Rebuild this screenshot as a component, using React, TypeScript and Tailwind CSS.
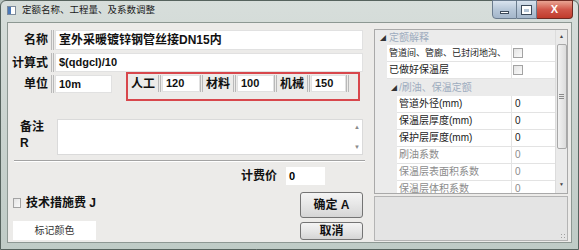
import React from "react";

const FONT =
  "font-['Liberation_Sans','Noto_Sans_CJK_SC',sans-serif]";

function Sep() {
  return (
    <div className="w-[3px] self-stretch flex justify-between">
      <div className="w-px bg-[#b9b9b9]" />
      <div className="w-px bg-[#b9b9b9]" />
    </div>
  );
}

function Field({ w, children }: { w: string; children?: React.ReactNode }) {
  return (
    <div
      className={`${w} self-stretch bg-white border border-[#e1e1e1] flex items-center pl-[3px] text-[11px] font-bold text-[#111] leading-none whitespace-nowrap overflow-hidden`}
    >
      {children}
    </div>
  );
}

function Label({ text, w = "w-[43px]" }: { text: string; w?: string }) {
  return (
    <div
      className={`${w} shrink-0 pr-[3px] text-right text-[12px] font-bold text-[#111] leading-none self-center`}
    >
      {text}
    </div>
  );
}

const ROWS1 = [
  { name: "管道间、管廊、已封闭地沟、", small: true },
  { name: "已做好保温层", small: false },
];

const ROWS2 = [
  { name: "管道外径(mm)", value: "0", dim: false },
  { name: "保温层厚度(mm)", value: "0", dim: false },
  { name: "保护层厚度(mm)", value: "0", dim: false },
  { name: "刷油系数", value: "0", dim: true },
  { name: "保温层表面积系数", value: "0", dim: true },
  { name: "保温层体积系数", value: "0", dim: true },
];

function Check() {
  return (
    <span className="block w-[10px] h-[10px] border border-[#a3a3a3] bg-gradient-to-br from-[#e4e4e4] to-[#fafafa]" />
  );
}

export default function App() {
  return (
    <div className={`w-[579px] h-[250px] overflow-hidden bg-[#b6c2bd] ${FONT}`}>
      <div className="w-[579px] h-[250px] flex flex-col rounded-t-[6px] border border-[#56635e] bg-gradient-to-b from-[#d7dedb] via-[#cad3cf] to-[#bfcbc6]">
        {/* title bar */}
        <div className="h-[21px] flex items-start shrink-0">
          <div className="mt-[5px] ml-[6px] w-[9px] h-[9px] bg-white border border-[#7d8b9c] flex">
            <div className="w-[3px] h-full bg-[#4a79b8]" />
          </div>
          <span className="ml-[6px] mt-[4px] text-[9.5px] leading-none text-[#1a1a1a]">
            定额名称、工程量、及系数调整
          </span>
          <div className="ml-auto mr-[5px] flex -mt-px h-[19px]">
            <div className="w-[25px] rounded-bl-[4px] border border-[#6b7c8e] bg-gradient-to-b from-[#d9e3ee] via-[#b7c7d8] to-[#a4b6ca] flex items-center justify-center">
              <div className="w-[9px] h-[3px] bg-white border border-[#3c4a5a] mt-[5px]" />
            </div>
            <div className="w-[20px] border-y border-r border-[#6b7c8e] bg-gradient-to-b from-[#d9e3ee] via-[#b7c7d8] to-[#a4b6ca] flex items-center justify-center">
              <div className="w-[9px] h-[8px] border-2 border-t-[3px] border-white outline outline-1 outline-[#3c4a5a]" />
            </div>
            <div className="w-[36px] rounded-br-[4px] border-y border-r border-[#6e2a22] bg-gradient-to-b from-[#e8a493] via-[#d0574a] to-[#c03b2c] flex items-center justify-center">
              <span className="text-white text-[11px] font-bold leading-none">X</span>
            </div>
          </div>
        </div>

        {/* client area */}
        <div className="ml-[6px] w-[565px] h-[221px] border border-[#8d9893] bg-[#ecebe9] flex shrink-0">
          {/* left side */}
          <div className="w-[357px] shrink-0 flex flex-col pt-[7px]">
            <div className="flex h-[20px]">
              <Label text="名称" />
              <Sep />
              <div className="ml-[1px] flex self-stretch">
                <Field w="w-[308px]">
                  <span className="text-[12px]">室外采暖镀锌钢管丝接DN15内</span>
                </Field>
              </div>
            </div>
            <div className="flex h-[19px] mt-[3px]">
              <Label text="计算式" />
              <Sep />
              <div className="ml-[1px] flex self-stretch">
                <Field w="w-[308px]">$(qdgcl)/10</Field>
              </div>
            </div>
            <div className="flex h-[29px] items-start">
              <div className="flex h-[18px] mt-[3px]">
                <Label text="单位" />
                <Sep />
                <div className="ml-[1px] flex self-stretch">
                  <Field w="w-[57px]">10m</Field>
                </div>
              </div>
              <div className="ml-[14px] w-[234px] h-[29px] border-2 border-[#d8474c] flex items-start">
                <div className="flex h-[17px] mt-px ml-[3px]">
                  <Label text="人工" w="w-[27px]" />
                  <Sep />
                  <div className="ml-[1px] flex self-stretch">
                    <Field w="w-[38px]">120</Field>
                  </div>
                  <Sep />
                  <Label text="材料" w="w-[30px]" />
                  <Sep />
                  <div className="ml-[1px] flex self-stretch">
                    <Field w="w-[37px]">100</Field>
                  </div>
                  <Sep />
                  <Label text="机械" w="w-[30px]" />
                  <Sep />
                  <div className="ml-[1px] flex self-stretch">
                    <Field w="w-[35px]">150</Field>
                  </div>
                  <Sep />
                </div>
              </div>
            </div>

            {/* remark */}
            <div className="flex mt-[18px] h-[36px]">
              <div className="w-[49px] pl-[12px] text-[12px] font-bold leading-[16px] text-[#111]">
                备注
                <br />
                R
              </div>
              <div className="w-[306px] h-[36px] bg-white border border-[#dadada] flex justify-end">
                <div className="w-[10px] flex flex-col justify-between items-center py-[4px] text-[6px] leading-none text-[#8a8a8a]">
                  <span>▲</span>
                  <span>▼</span>
                </div>
              </div>
            </div>

            <div className="mt-[5px] ml-[6px] w-[351px] h-[2px] border-t border-[#a3a3a3] border-b border-b-white" />

            {/* fee */}
            <div className="flex h-[18px] mt-[5px] items-center">
              <div className="ml-[233px] w-[36px] text-[12px] font-bold leading-none text-[#111]">
                计费价
              </div>
              <div className="ml-[9px] w-[39px] h-[18px] bg-white flex items-center pl-[3px] text-[11px] font-bold leading-none">
                0
              </div>
            </div>

            {/* bottom */}
            <div className="flex mt-[6px] h-[49px]">
              <div className="ml-[5px] w-[83px] flex flex-col">
                <div className="mt-[6px] h-[11px] flex items-center">
                  <Check />
                  <span className="ml-[5px] text-[12px] font-bold leading-none whitespace-nowrap text-[#111]">
                    技术措施费 J
                  </span>
                </div>
                <div className="mt-[13px] w-[83px] h-[19px] bg-white flex items-center justify-center text-[10px] leading-none text-[#333]">
                  标记颜色
                </div>
              </div>
              <div className="ml-[204px] w-[63px] flex flex-col">
                <div className="mt-px h-[26px] rounded-[3px] border border-[#747474] bg-gradient-to-b from-[#f4f4f4] via-[#e6e6e6] to-[#d5d5d5] flex items-center justify-center text-[12px] font-bold leading-none text-[#111]">
                  确定 A
                </div>
                <div className="mt-[4px] h-[18px] rounded-[3px] border border-[#747474] bg-gradient-to-b from-[#f4f4f4] via-[#e6e6e6] to-[#d5d5d5] flex items-center justify-center text-[12px] font-bold leading-none text-[#111]">
                  取消
                </div>
              </div>
            </div>
          </div>

          {/* right property panel */}
          <div className="ml-[9px] w-[194px] flex flex-col mt-[6px]">
            <div className="h-[165px] border border-[#a9a9a9] bg-white flex overflow-hidden">
              <div className="w-[180px] flex flex-col overflow-hidden text-[10px] leading-none">
                <div className="h-[15px] shrink-0 bg-[#ebebeb] flex items-center">
                  <span className="ml-[5px] text-[6px] text-[#333]">◢</span>
                  <span className="ml-[3px] text-[#9dabbe]">定额解释</span>
                </div>
                {ROWS1.map((r) => (
                  <div key={r.name} className="h-[17px] shrink-0 flex">
                    <div className="w-[12px] bg-[#ebebeb]" />
                    <div
                      className={`w-[125px] border-b border-r border-[#e3e3e3] flex items-center pl-[2px] text-[#1a1a1a] whitespace-nowrap ${
                        r.small ? "text-[9px]" : ""
                      }`}
                    >
                      {r.name}
                    </div>
                    <div className="flex-1 border-b border-[#e3e3e3] flex items-center pl-[1px]">
                      <Check />
                    </div>
                  </div>
                ))}
                <div className="h-[17px] shrink-0 flex bg-[#ebebeb]">
                  <div className="w-[12px]" />
                  <div className="flex items-center">
                    <span className="ml-[4px] text-[6px] text-[#333]">◢</span>
                    <span className="ml-[2px] text-[#9dabbe]">/刷油、保温定额</span>
                  </div>
                </div>
                {ROWS2.map((r) => (
                  <div key={r.name} className="h-[17px] shrink-0 flex">
                    <div className="w-[22px] bg-[#ebebeb]" />
                    <div
                      className={`w-[115px] border-b border-r border-[#e3e3e3] flex items-center pl-[2px] whitespace-nowrap overflow-hidden ${
                        r.dim ? "text-[#8c8c8c]" : "text-[#1a1a1a]"
                      }`}
                    >
                      {r.name}
                    </div>
                    <div
                      className={`flex-1 border-b border-[#e3e3e3] flex items-center pl-[3px] ${
                        r.dim ? "text-[#8c8c8c]" : "text-[#1a1a1a]"
                      }`}
                    >
                      {r.value}
                    </div>
                  </div>
                ))}
              </div>
              {/* scrollbar */}
              <div className="w-[12px] bg-[#eaeaea] border-l border-[#dcdcdc] flex flex-col items-center">
                <span className="mt-[4px] text-[5px] leading-none text-[#444]">▲</span>
                <div className="mt-[5px] w-[10px] h-[105px] rounded-[2px] border border-[#a8a8a8] bg-gradient-to-r from-[#f2f2f2] to-[#dcdcdc] flex items-center justify-center">
                  <div className="w-[5px] flex flex-col gap-[1px]">
                    <div className="h-px bg-[#8a8a8a]" />
                    <div className="h-px bg-[#8a8a8a]" />
                    <div className="h-px bg-[#8a8a8a]" />
                  </div>
                </div>
                <span className="mt-auto mb-[6px] text-[5px] leading-none text-[#444]">▼</span>
              </div>
            </div>
            <div className="mt-[2px] h-[45px] border border-[#b4b4b4] bg-[#e4e4e4] flex items-end justify-end">
              <div className="w-[6px] h-[6px] mb-px mr-px bg-[radial-gradient(#a0a0a0_1px,transparent_1px)] bg-[length:3px_3px]" />
            </div>
          </div>
        </div>
      </div>
    </div>
  );
}
